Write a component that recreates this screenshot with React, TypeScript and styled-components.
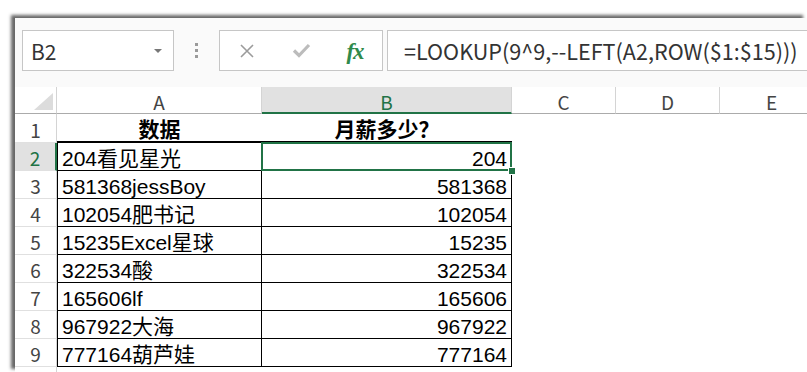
import React from 'react';
import styled, {createGlobalStyle, css} from 'styled-components';

const GREEN = '#217346';
const UI_FONT = '"Noto Sans CJK SC", "Noto Sans", sans-serif';
const CELL_FONT = '"Liberation Sans", "Noto Sans CJK SC", sans-serif';

const GlobalStyle = createGlobalStyle`
    body {
        margin: 0;
        background: #fff;
        overflow: hidden;
    }
`

const Frame = styled.div`
    padding: 18px 0 0 15px;
`

const Window = styled.div`
    width: 792px;
    height: 354px;
    background: #fff;
    overflow: hidden;
    box-shadow: -4px -3px 3px rgba(40, 40, 40, 0.7);
`

const Toolbar = styled.div`
    display: flex;
    align-items: center;
    height: 41px;
    padding: 12px 0 16px 7px;
    background: #fafafa;
`

const NameBox = styled.div`
    height: 39px;
    border: 1px solid #c6c6c6;
    background: #fff;
    display: flex;
    align-items: center;
    padding-left: 8px;
    width: 142px;
    font: 21px ${UI_FONT};
    color: #333;
`

const DropArrow = styled.span`
    margin-left: auto;
    margin-right: 11px;
    border-left: 4px solid transparent;
    border-right: 4px solid transparent;
    border-top: 4px solid #777;
`

const Dots = styled.div`
    width: 45px;
    display: flex;
    flex-direction: column;
    align-items: center;
    gap: 3px;

    span {
        width: 3px;
        height: 3px;
        background: #9a9a9a;
    }
`

const ButtonGroup = styled.div`
    width: 162px;
    height: 39px;
    border: 1px solid #c6c6c6;
    background: #fff;
    display: flex;
    align-items: center;
`

const ToolButton = styled.div`
    width: 54px;
    display: flex;
    justify-content: center;
    align-items: center;
`

const Fx = styled.span`
    font: italic bold 23px "Liberation Serif", serif;
    color: #2f8a4c;
    letter-spacing: -1px;
    margin-top: 2px;
`

const FormulaBox = styled.div`
    flex: 1;
    margin-left: 4px;
    margin-right: -20px;
    height: 39px;
    border: 1px solid #c6c6c6;
    background: #fff;
    display: flex;
    align-items: center;
    padding-left: 16px;
    font: 21.6px ${UI_FONT};
    color: #333;
    white-space: nowrap;
`

const Sheet = styled.div`
    display: grid;
    grid-template-columns: 42px 205px 250px 104px 104px 104px;
    grid-template-rows: 27px 29px repeat(9, 28px);
`

const Corner = styled.div`
    position: relative;
    border-right: 1px solid #d4d4d4;
    border-bottom: 1px solid #ababab;

    &::after {
        content: '';
        position: absolute;
        right: 3px;
        bottom: 3px;
        border-left: 19px solid transparent;
        border-bottom: 17px solid #dcdcdc;
    }
`

const ColHead = styled.div<{ $active?: boolean }>`
    display: flex;
    align-items: center;
    justify-content: center;
    padding-top: 3px;
    font: 19px ${UI_FONT};
    color: #444;
    border-right: 1px solid #d4d4d4;
    border-bottom: 1px solid #ababab;
    ${p => p.$active && css`
        background: #e1e1e1;
        color: ${GREEN};
        border-bottom: 2px solid ${GREEN};
    `}
`

const RowHead = styled.div<{ $active?: boolean }>`
    display: flex;
    align-items: center;
    justify-content: center;
    padding-top: 2px;
    font: 19px ${UI_FONT};
    color: #444;
    border-right: 1px solid #d4d4d4;
    border-bottom: 1px solid #e0e0e0;
    ${p => p.$active && css`
        background: #e1e1e1;
        color: ${GREEN};
        border-right: 2px solid ${GREEN};
    `}
`

const Cell = styled.div<{ $bordered?: boolean; $first?: boolean; $right?: boolean; $title?: boolean; $selected?: boolean }>`
    position: relative;
    display: flex;
    align-items: flex-end;
    padding: 0 4px 1px;
    font: 21px/21px ${CELL_FONT};
    color: #000;
    white-space: nowrap;
    justify-content: ${p => (p.$right ? 'flex-end' : 'flex-start')};
    ${p => p.$bordered && css`
        border-right: 1px solid #000;
        border-bottom: 1px solid #000;
    `}
    ${p => p.$first && css`
        border-left: 1px solid #000;
    `}
    ${p => p.$title && css`
        justify-content: center;
        font-weight: bold;
        border-bottom: 2px solid #000;
        padding-bottom: 1px;
    `}
    ${p => p.$selected && css`
        &::after {
            content: '';
            position: absolute;
            inset: -1px;
            border: 2px solid ${GREEN};
        }
    `}
`

const FillHandle = styled.span`
    position: absolute;
    right: -5px;
    bottom: -5px;
    width: 6px;
    height: 6px;
    background: ${GREEN};
    border: 1px solid #fff;
    z-index: 2;
`

const Blank = styled.div``

const rows: [string, string][] = [
    ['204看见星光', '204'],
    ['581368jessBoy', '581368'],
    ['102054肥书记', '102054'],
    ['15235Excel星球', '15235'],
    ['322534酸', '322534'],
    ['165606lf', '165606'],
    ['967922大海', '967922'],
    ['777164葫芦娃', '777164'],
];

const CloseIcon = () => (
    <svg width="16" height="16" viewBox="0 0 16 16">
        <path d="M2 2 L14 14 M14 2 L2 14" stroke="#9b9b9b" strokeWidth="1.6" fill="none"/>
    </svg>
);

const CheckIcon = () => (
    <svg width="19" height="15" viewBox="0 0 19 15">
        <path d="M2 7.5 L7 12.5 L17 2" stroke="#bcbcbc" strokeWidth="3.2" fill="none"/>
    </svg>
);

const App = () => {
    return (
        <Frame>
            <GlobalStyle/>
            <Window>
                <Toolbar>
                    <NameBox>B2<DropArrow/></NameBox>
                    <Dots><span/><span/><span/></Dots>
                    <ButtonGroup>
                        <ToolButton><CloseIcon/></ToolButton>
                        <ToolButton><CheckIcon/></ToolButton>
                        <ToolButton><Fx>fx</Fx></ToolButton>
                    </ButtonGroup>
                    <FormulaBox>=LOOKUP(9^9,--LEFT(A2,ROW($1:$15)))</FormulaBox>
                </Toolbar>
                <Sheet>
                    <Corner/>
                    <ColHead>A</ColHead>
                    <ColHead $active>B</ColHead>
                    <ColHead>C</ColHead>
                    <ColHead>D</ColHead>
                    <ColHead>E</ColHead>

                    <RowHead>1</RowHead>
                    <Cell $title>数据</Cell>
                    <Cell $title>月薪多少？</Cell>
                    <Blank/><Blank/><Blank/>

                    {rows.map(([a, b], i) => (
                        <React.Fragment key={i}>
                            <RowHead $active={i === 0}>{i + 2}</RowHead>
                            <Cell $bordered $first>{a}</Cell>
                            <Cell $bordered $right $selected={i === 0}>
                                {b}
                                {i === 0 && <FillHandle/>}
                            </Cell>
                            <Blank/><Blank/><Blank/>
                        </React.Fragment>
                    ))}
                    <RowHead/>
                </Sheet>
            </Window>
        </Frame>
    );
}

export default App;
